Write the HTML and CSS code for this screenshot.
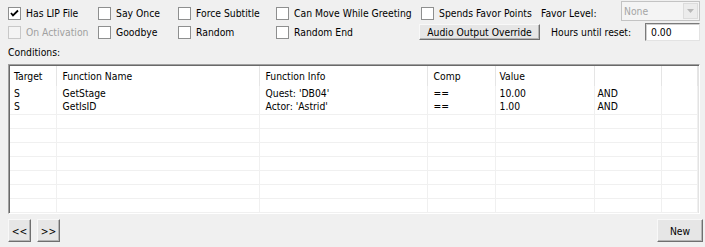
FILE: index.html
```html
<!DOCTYPE html>
<html lang="en">
<head>
    <meta charset="UTF-8">
    <title>Dialogue Conditions</title>
    <link rel="stylesheet" href="styles.css">
</head>
<body>
    <div class="dialog">
        <div class="opt-row first">
            <label class="chk c1"><span class="box checked"><svg width="11" height="11" viewBox="0 0 11 11"><polyline points="2,5 4,7.5 9,2.5" fill="none" stroke="#000" stroke-width="1.8"/></svg></span>Has LIP File</label>
            <label class="chk c2"><span class="box"></span>Say Once</label>
            <label class="chk c3"><span class="box"></span>Force Subtitle</label>
            <label class="chk c4"><span class="box"></span>Can Move While Greeting</label>
            <label class="chk c5"><span class="box"></span>Spends Favor Points</label>
            <span class="field-label favor">Favor Level:</span>
            <div class="combo">
                <span class="combo-text">None</span>
                <span class="combo-btn"><svg width="7" height="4" viewBox="0 0 7 4"><polygon points="0,0 7,0 3.5,4" fill="#b8b8b8"/></svg></span>
            </div>
        </div>

        <div class="opt-row second">
            <label class="chk c1 disabled"><span class="box"></span>On Activation</label>
            <label class="chk c2"><span class="box"></span>Goodbye</label>
            <label class="chk c3"><span class="box"></span>Random</label>
            <label class="chk c4b"><span class="box"></span>Random End</label>
            <button class="btn audio">Audio Output Override</button>
            <span class="field-label hours">Hours until reset:</span>
            <input type="text" class="hours-input" value="0.00">
        </div>

        <div class="section-label">Conditions:</div>

        <div class="list">
            <table class="grid">
                <colgroup>
                    <col style="width:46px">
                    <col style="width:203px">
                    <col style="width:168px">
                    <col style="width:68px">
                    <col style="width:99px">
                    <col style="width:67px">
                    <col>
                </colgroup>
                <thead>
                    <tr>
                        <th class="first-col">Target</th>
                        <th>Function Name</th>
                        <th>Function Info</th>
                        <th>Comp</th>
                        <th class="val">Value</th>
                        <th></th>
                        <th></th>
                    </tr>
                </thead>
                <tbody>
                    <tr class="data">
                        <td class="first-col">S</td>
                        <td>GetStage</td>
                        <td>Quest: 'DB04'</td>
                        <td>==</td>
                        <td class="val">10.00</td>
                        <td class="op">AND</td>
                        <td></td>
                    </tr>
                    <tr class="data last-data">
                        <td class="first-col">S</td>
                        <td>GetIsID</td>
                        <td>Actor: 'Astrid'</td>
                        <td>==</td>
                        <td class="val">1.00</td>
                        <td class="op">AND</td>
                        <td></td>
                    </tr>
                    <tr class="empty"><td></td><td></td><td></td><td></td><td></td><td></td><td></td></tr>
                    <tr class="empty"><td></td><td></td><td></td><td></td><td></td><td></td><td></td></tr>
                    <tr class="empty"><td></td><td></td><td></td><td></td><td></td><td></td><td></td></tr>
                    <tr class="empty"><td></td><td></td><td></td><td></td><td></td><td></td><td></td></tr>
                    <tr class="empty"><td></td><td></td><td></td><td></td><td></td><td></td><td></td></tr>
                    <tr class="empty"><td></td><td></td><td></td><td></td><td></td><td></td><td></td></tr>
                    <tr class="empty"><td></td><td></td><td></td><td></td><td></td><td></td><td></td></tr>
                </tbody>
            </table>
        </div>

        <div class="bottom-bar">
            <div class="nav">
                <button class="btn small">&lt;&lt;</button>
                <button class="btn small">&gt;&gt;</button>
            </div>
            <button class="btn new">New</button>
        </div>
    </div>
</body>
</html>
```

FILE: styles.css
```css
html, body {
    margin: 0;
    padding: 0;
    background-color: #f0f0f0;
}
body {
    font-family: "DejaVu Sans Condensed", "Liberation Sans", Arial, sans-serif;
    font-size: 10.3px;
    color: #000;
    width: 705px;
    height: 247px;
    overflow: hidden;
}
.dialog {
    padding: 3px 5px 0 8px;
}
.opt-row {
    display: flex;
    align-items: center;
}
.opt-row.first {
    height: 20px;
}
.opt-row.second {
    height: 18px;
}
.chk {
    display: flex;
    align-items: center;
    gap: 5px;
    white-space: nowrap;
    overflow: hidden;
    flex: none;
}
.c1 { width: 90px; }
.c2 { width: 80px; }
.c3 { width: 98px; }
.c4 { width: 145px; }
.c4b { width: 143px; }
.c5 { width: 120px; }
.box {
    flex: none;
    width: 11px;
    height: 11px;
    background-color: #fff;
    border: 1px solid #8e8f8f;
    display: flex;
    align-items: center;
    justify-content: center;
}
.chk.disabled {
    color: #a0a0a0;
    width: 82px;
    margin-right: 8px;
}
.chk.disabled .box {
    background-color: #f4f4f4;
    border-color: #c8c8c8;
}
.field-label {
    white-space: nowrap;
    flex: none;
}
.favor {
    width: 80px;
}
.combo {
    flex: none;
    align-self: flex-start;
    margin-top: -2px;
    width: 77px;
    height: 18px;
    border: 1px solid #c3c3c3;
    background-color: #f4f4f4;
    display: flex;
    align-items: center;
    justify-content: space-between;
    color: #a5a5a5;
}
.combo-text {
    padding-left: 2px;
}
.combo-btn {
    width: 15px;
    height: 16px;
    margin-right: 1px;
    background-color: #ececec;
    border: 1px solid #dcdcdc;
    box-sizing: border-box;
    display: flex;
    align-items: center;
    justify-content: center;
}
.btn {
    font-family: inherit;
    font-size: 10.3px;
    color: #000;
    background-color: #e6e6e6;
    border: 1px solid;
    border-color: #f8f8f8 #6f6f6f #6f6f6f #f8f8f8;
    box-shadow: inset -1px -1px 0 #b5b5b5;
    padding: 0;
    margin: 0;
    cursor: pointer;
}
.audio {
    flex: none;
    width: 121px;
    height: 16px;
    line-height: 13px;
}
.hours {
    margin-left: 11px;
    width: 94px;
}
.hours-input {
    flex: none;
    width: 55px;
    height: 18px;
    box-sizing: border-box;
    margin: 0;
    padding: 0 0 0 5px;
    font-family: inherit;
    font-size: 10.3px;
    background-color: #fff;
    border: 1px solid;
    border-color: #7a7a7a #e3e3e3 #e3e3e3 #7a7a7a;
    box-shadow: inset 1px 1px 0 #d0d0d0;
}
.section-label {
    margin-top: 4px;
    line-height: 14px;
}
.list {
    margin-top: 5px;
    width: 692px;
    height: 150px;
    box-sizing: border-box;
    background-color: #fff;
    border: 1px solid;
    border-color: #a0a0a0 #fff #fff #a0a0a0;
    box-shadow: inset 1px 1px 0 #696969, inset -1px -1px 0 #e3e3e3;
    padding: 1px;
    overflow: hidden;
}
.grid {
    border-collapse: collapse;
    table-layout: fixed;
    width: 688px;
}
.grid th {
    height: 20px;
    padding: 0 0 0 6px;
    font-weight: normal;
    text-align: left;
    border-right: 1px solid #e5e5e5;
    white-space: nowrap;
    box-sizing: border-box;
}
.grid td {
    height: 14px;
    padding: 0 0 0 6px;
    line-height: 13px;
    border-right: 1px solid #f0f0f0;
    white-space: nowrap;
    box-sizing: border-box;
}
.grid .first-col {
    padding-left: 4px;
}
.grid .val {
    padding-left: 4px;
}
.grid .op {
    padding-left: 3px;
}
.grid tr.last-data td,
.grid tr.empty td {
    border-bottom: 1px solid #f0f0f0;
}
.bottom-bar {
    margin-top: 5px;
    display: flex;
    justify-content: space-between;
    width: 695px;
}
.nav {
    display: flex;
    gap: 6px;
}
.btn.small {
    width: 23px;
    height: 23px;
}
.btn.new {
    width: 46px;
    height: 23px;
}
```
